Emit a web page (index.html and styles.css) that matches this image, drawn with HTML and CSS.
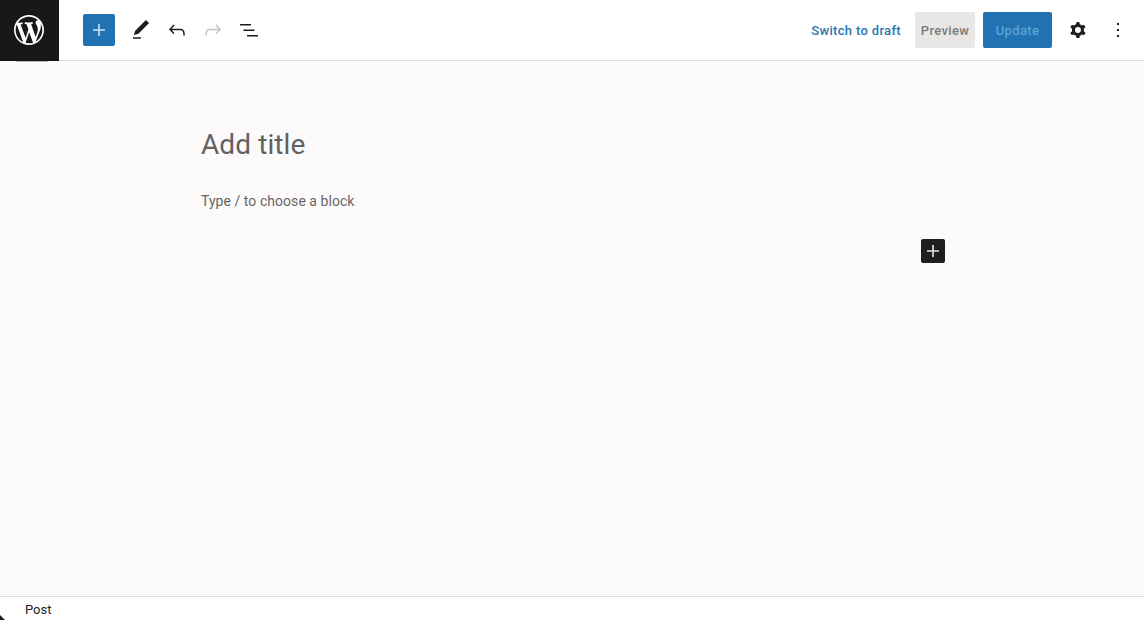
FILE: index.html
```html
<!DOCTYPE html>
<html lang="en">
<head>
<meta charset="utf-8">
<title>Edit Post</title>
<link rel="stylesheet" href="styles.css">
</head>
<body>
<div class="app">
  <header class="topbar">
    <a class="logo" href="#" aria-label="WordPress">
      <svg viewBox="-2 -2 24 24" width="36" height="36"><path fill="#fff" d="M20 10c0-5.51-4.49-10-10-10C4.48 0 0 4.49 0 10c0 5.52 4.48 10 10 10 5.51 0 10-4.48 10-10zM7.78 15.37L4.37 6.22c.55-.02 1.17-.08 1.17-.08.5-.06.44-1.13-.06-1.11 0 0-1.45.11-2.37.11-.18 0-.37 0-.58-.01C4.12 2.69 6.87 1.11 10 1.11c2.33 0 4.45.87 6.05 2.34-.68-.11-1.65.39-1.65 1.58 0 .74.45 1.36.9 2.1.35.61.55 1.36.55 2.46 0 1.49-1.4 5-1.4 5l-3.03-8.37c.54-.02.82-.17.82-.17.5-.05.44-1.25-.06-1.22 0 0-1.44.12-2.38.12-.87 0-2.33-.12-2.33-.12-.5-.03-.56 1.2-.06 1.22l.92.08 1.26 3.41zM17.41 10c.24-.64.74-1.87.43-4.25.7 1.29 1.05 2.71 1.05 4.25 0 3.29-1.73 6.24-4.4 7.78.97-2.59 1.94-5.2 2.92-7.78zM6.1 18.09C3.12 16.65 1.11 13.53 1.11 10c0-1.3.23-2.48.72-3.59C3.25 10.3 4.67 14.2 6.1 18.09zm4.03-6.63l2.58 6.98c-.86.29-1.76.45-2.71.45-.79 0-1.57-.11-2.29-.33.81-2.38 1.62-4.74 2.42-7.1z"/></svg>
    </a>
    <div class="tools">
      <button class="inserter" aria-label="Add block">
        <svg viewBox="0 0 24 24" width="24" height="24"><path fill="#cfe3f2" d="M18 11.2h-5.2V6h-1.6v5.2H6v1.6h5.2V18h1.6v-5.2H18z"/></svg>
      </button>
      <button class="tool" aria-label="Tools">
        <svg viewBox="0 0 24 24" width="24" height="24"><path fill="#1e1e1e" d="M20.1 5.1L16.9 2 6.2 12.7l-1.3 4.4 4.5-1.3L20.1 5.1zM4 20.8h8v-1.5H4v1.5z"/></svg>
      </button>
      <button class="tool" aria-label="Undo">
        <svg viewBox="0 0 24 24" width="24" height="24"><path fill="#1e1e1e" d="M18.3 11.7c-.6-.6-1.4-.9-2.3-.9H6.7l2.9-3.3-1.1-1-4.5 5L8.5 16l1-1-2.7-2.7H16c.5 0 .9.2 1.3.5 1 1 1 3.4 1 4.5v.3h1.5v-.2c0-1.5 0-4.3-1.5-5.7z"/></svg>
      </button>
      <button class="tool" aria-label="Redo">
        <svg viewBox="0 0 24 24" width="24" height="24"><path fill="#c4c4c4" d="M15.6 6.5l-1.1 1 2.9 3.3H8c-.9 0-1.7.3-2.3.9-1.4 1.5-1.4 4.2-1.4 5.6v.2h1.5v-.3c0-1.1 0-3.5 1-4.5.3-.3.7-.5 1.3-.5h9.2L14.5 15l1.1 1.1 4.6-4.6-4.6-5z"/></svg>
      </button>
      <button class="tool" aria-label="List view">
        <svg viewBox="0 0 24 24" width="24" height="24"><path fill="#1e1e1e" d="M3 6h11v1.5H3V6zm3.5 5.5h11V13h-11v-1.5zM10 17h11v1.5H10V17z"/></svg>
      </button>
    </div>
    <div class="actions">
      <a class="draft" href="#">Switch to draft</a>
      <button class="preview">Preview</button>
      <button class="update">Update</button>
      <button class="tool gear" aria-label="Settings">
        <svg viewBox="0 0 24 24" width="24" height="24"><path fill="#1e1e1e" fill-rule="evenodd" d="M10.289 4.836A1 1 0 0111.275 4h1.306a1 1 0 01.987.836l.244 1.466c.787.26 1.503.679 2.108 1.218l1.393-.522a1 1 0 011.216.437l.653 1.13a1 1 0 01-.23 1.273l-1.148.944a6.025 6.025 0 010 2.435l1.149.946a1 1 0 01.23 1.272l-.653 1.13a1 1 0 01-1.216.437l-1.394-.522c-.605.54-1.32.958-2.108 1.218l-.244 1.466a1 1 0 01-.987.836h-1.306a1 1 0 01-.986-.836l-.244-1.466a5.995 5.995 0 01-2.108-1.218l-1.394.522a1 1 0 01-1.216-.437l-.653-1.13a1 1 0 01.23-1.272l1.149-.946a6.026 6.026 0 010-2.435l-1.148-.944a1 1 0 01-.23-1.272l.653-1.131a1 1 0 011.216-.437l1.393.522a5.994 5.994 0 012.108-1.218l.244-1.466zM14.929 12a3 3 0 11-6 0 3 3 0 016 0z"/></svg>
      </button>
      <button class="tool more" aria-label="Options">
        <svg viewBox="0 0 24 24" width="24" height="24"><path fill="#1e1e1e" d="M13 19h-2v-2h2v2zm0-6h-2v-2h2v2zm0-6h-2V5h2v2z"/></svg>
      </button>
    </div>
  </header>
  <main class="editor">
    <div class="canvas">
      <h1 class="title">Add title</h1>
      <p class="hint">Type / to choose a block</p>
      <div class="appender">
        <button class="block-add" aria-label="Add block">
          <svg viewBox="0 0 24 24" width="24" height="24"><path fill="#e6e6e6" d="M18 11.2h-5.2V6h-1.6v5.2H6v1.6h5.2V18h1.6v-5.2H18z"/></svg>
        </button>
      </div>
    </div>
  </main>
  <footer class="statusbar">Post</footer>
</div>
</body>
</html>
```

FILE: styles.css
```css
* { box-sizing: border-box; }

html, body { margin: 0; height: 100%; }

body {
  font-family: Roboto, "Liberation Sans", sans-serif;
  background: #fcfafb;
  color: #1e1e1e;
  overflow: hidden;
}

button {
  border: 0;
  padding: 0;
  background: none;
  font: inherit;
  display: flex;
  align-items: center;
  justify-content: center;
}

.app {
  display: flex;
  flex-direction: column;
  height: 620px;
  position: relative;
}

.topbar {
  display: flex;
  align-items: center;
  height: 61px;
  flex: none;
  background: #fff;
  border-bottom: 1px solid #dedcdd;
  position: relative;
}

.topbar::after {
  content: "";
  position: absolute;
  left: 16px;
  top: 61px;
  width: 32px;
  height: 1px;
  background: #b5b4b4;
}

.logo {
  width: 59px;
  height: 61px;
  flex: none;
  align-self: flex-start;
  background: #181818;
  display: flex;
  align-items: center;
  justify-content: center;
  position: relative;
  z-index: 1;
  padding: 0 1px 1px 0;
}

.tools {
  display: flex;
  align-items: center;
  margin-left: 24px;
}

.inserter {
  width: 32px;
  height: 32px;
  border-radius: 2px;
  background: #2271b1;
  margin-right: 8px;
}

.tool {
  width: 36px;
  height: 36px;
}

.actions {
  display: flex;
  align-items: center;
  margin-left: auto;
  padding-right: 8px;
}

.draft {
  font-size: 13px;
  font-weight: 500;
  letter-spacing: .33px;
  color: #2a78ae;
  text-decoration: none;
  margin-right: 14px;
}

.preview, .update {
  height: 36px;
  font-size: 13px;
  font-weight: 500;
  letter-spacing: .35px;
  border-radius: 2px;
}

.preview {
  width: 60px;
  background: #e8e7e6;
  color: #7c7c7c;
  margin-right: 8px;
}

.update {
  width: 69px;
  background: #2271b1;
  color: #5ca3d5;
  margin-right: 8px;
}

.gear { margin-right: 4px; }

.editor {
  flex: 1;
  min-height: 0;
  padding-left: 201px;
}

.canvas {
  width: 744px;
  padding-top: 66px;
}

.title {
  margin: 0;
  font-size: 28px;
  line-height: 36px;
  font-weight: 400;
  letter-spacing: .1px;
  color: #626262;
}

.hint {
  margin: 28px 0 0;
  font-size: 14px;
  line-height: 20px;
  letter-spacing: .05px;
  color: #666;
}

.appender {
  display: flex;
  justify-content: flex-end;
  margin-top: 28px;
}

.block-add {
  width: 24px;
  height: 24px;
  border-radius: 2px;
  background: #1e1e1e;
}

.statusbar {
  flex: none;
  height: 24px;
  padding-left: 25px;
  background: #fff;
  border-top: 1px solid #dedcdd;
  font-size: 13px;
  line-height: 25px;
  color: #1e1e1e;
  position: relative;
}

.statusbar::before {
  content: "";
  position: absolute;
  left: 0;
  bottom: 0;
  width: 0;
  height: 0;
  border-style: solid;
  border-width: 5px 0 0 5px;
  border-color: transparent transparent transparent #1e1e1e;
}
```
